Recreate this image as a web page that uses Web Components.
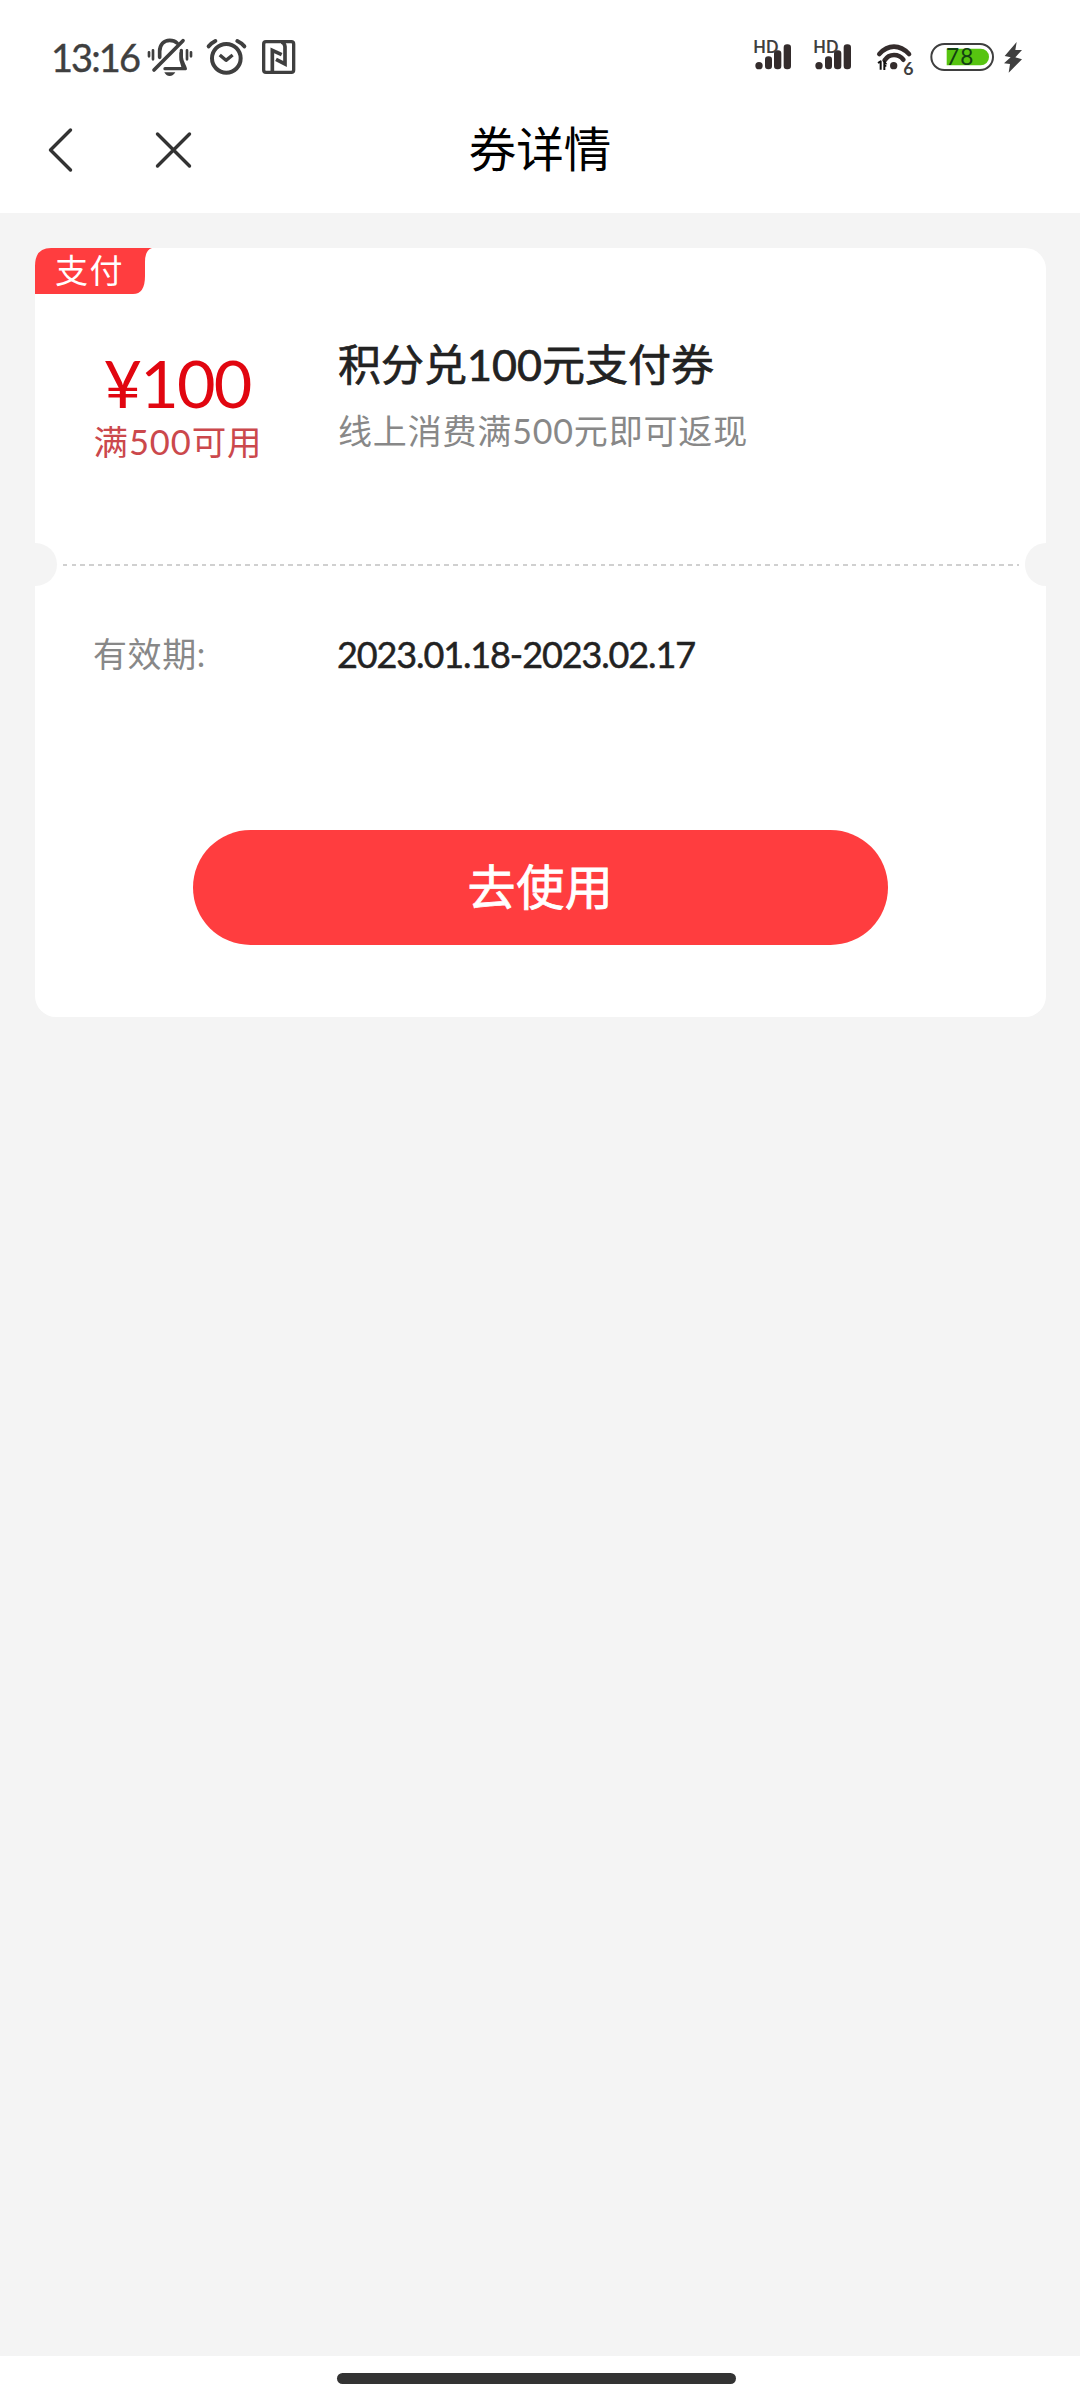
<!DOCTYPE html>
<html lang="zh-CN">
<head>
<meta charset="utf-8">
<title>券详情</title>
<style>
html,body{margin:0;padding:0;background:#f4f4f4}
body{font-family:Lato,"Noto Sans CJK SC",sans-serif;color:#222}
</style>
</head>
<body>
<coupon-page>
  <status-bar></status-bar>
  <nav-bar>券详情</nav-bar>
  <coupon-card>
    <fit-text slot="tag" width="69">支付</fit-text>
    <fit-text slot="amount" width="147">¥100</fit-text>
    <fit-text slot="limit" width="169">满500可用</fit-text>
    <fit-text slot="name" width="376">积分兑100元支付券</fit-text>
    <fit-text slot="desc" width="410">线上消费满500元即可返现</fit-text>
    <fit-text slot="label" width="113">有效期:</fit-text>
    <fit-text slot="date" width="358">2023.01.18-2023.02.17</fit-text>
    <action-button slot="action"><fit-text width="146">去使用</fit-text></action-button>
  </coupon-card>
  <home-indicator></home-indicator>
</coupon-page>
<script>
function define(name, html, connected) {
  const tpl = document.createElement('template');
  tpl.innerHTML = html;
  customElements.define(name, class extends HTMLElement {
    constructor() {
      super();
      this.attachShadow({mode: 'open'}).append(tpl.content.cloneNode(true));
    }
    connectedCallback() { if (connected) connected(this); }
  });
}

define('coupon-page', `<style>
:host{display:flex;flex-direction:column;width:1080px;height:2400px;background:#f4f4f4}
</style><slot></slot>`);

define('status-bar', `<style>
:host{display:flex;align-items:flex-start;box-sizing:border-box;height:100px;padding:20px 0 0 51px;background:#fff;color:#3f3f3f}
svg{display:block;height:80px;flex:none;fill:none;stroke:#3f3f3f;stroke-linecap:round;stroke-linejoin:round}
.time{width:93px;padding-top:14px;font-size:38px;line-height:46px;white-space:nowrap;-webkit-text-stroke:.4px #3f3f3f}
text{fill:#3f3f3f;stroke:none;font-family:Lato,sans-serif}
.gap{flex:1}
.sig{fill:#342c2c;stroke:none}
</style>
<div class="time"><fit-text width="88">13:16</fit-text></div>
<svg style="width:52px" viewBox="342 0 156 240">
 <path d="M357 97v12M369 91v27M471 91v27M483 97v12" stroke-width="8"/>
 <path d="M389 112V94C389 74 402 61 419 61C429 61 436 64 441 69M372 150L459 62" stroke-width="11"/>
 <path d="M454 91V112C455 127 462 134 466 146H405" stroke-width="10"/>
 <path d="M454 91V116L468 146H412L418 141H454L448 120V98Z" fill="#3f3f3f" stroke="none"/>
 <path d="M403 157h33q-6 11-17 11t-16-11z" fill="#3f3f3f" stroke="none"/>
</svg>
<svg style="width:52px;margin-left:4px" viewBox="510 0 156 240" stroke-width="12">
 <circle cx="589" cy="115" r="43"/>
 <path d="M536 79Q544 69 556 63M622 63Q635 69 643 79"/>
 <path d="M573 108L588 121L604 108" stroke-linecap="square" stroke-width="10"/>
</svg>
<svg style="width:50px;margin-left:2px" viewBox="672 0 150 240" stroke-width="10">
 <rect x="701" y="65" width="90" height="92" rx="7"/>
 <path d="M727 154V91L755 104M738 118L765 132V80Q764 68 754 66" stroke-width="11" stroke-linecap="butt" stroke-linejoin="miter"/>
</svg>
<div class="gap"></div>
<svg style="width:60px" viewBox="60 0 180 240">
 <g class="sig"><circle cx="87" cy="137" r="11"/><rect x="105" y="109" width="21" height="39" rx="10"/><rect x="132" y="91" width="22" height="57" rx="10"/><rect x="161" y="73" width="22" height="75" rx="10"/></g>
 <text x="70" y="98" font-size="49" font-weight="700" textLength="75" lengthAdjust="spacingAndGlyphs">HD</text>
</svg>
<svg style="width:60px" viewBox="60 0 180 240">
 <g class="sig"><circle cx="87" cy="137" r="11"/><rect x="105" y="109" width="21" height="39" rx="10"/><rect x="132" y="91" width="22" height="57" rx="10"/><rect x="161" y="73" width="22" height="75" rx="10"/></g>
 <text x="70" y="98" font-size="49" font-weight="700" textLength="75" lengthAdjust="spacingAndGlyphs">HD</text>
</svg>
<svg style="width:55px" viewBox="420 0 165 240" stroke-width="14">
 <path d="M448 102Q468 80 492 80T537 102M464 121Q474 105 492 105T520 119" style="stroke:#342c2c"/>
 <circle class="sig" cx="491" cy="137" r="11"/>
 <path d="M444 129L452 124V149M463 122V150M463 137H469" stroke="#111" stroke-width="6" stroke-linecap="butt"/>
 <path d="M463 120L472 133H463Z" fill="#111" stroke="none"/>
 <text x="520" y="165" font-size="50" font-weight="700" textLength="31" lengthAdjust="spacingAndGlyphs">6</text>
</svg>
<svg style="width:75px" viewBox="585 0 225 240" stroke-width="6">
 <rect x="604" y="72" width="185" height="78" rx="39"/>
 <path d="M650 86H752A25 25 0 0 1 752 136H650Z" fill="#57c410" stroke="none"/>
 <text x="648" y="136" font-size="68" textLength="82" style="fill:#123f12">78</text>
</svg>
<svg style="width:80px" viewBox="810 0 240 240">
 <path d="M860 66L824 108L842 112L822 130L840 132L836 158L876 118L856 112L876 90L856 90Z" fill="#3f3f3f" stroke="none"/>
</svg>`);

define('nav-bar', `<style>
:host{display:grid;grid-template-columns:1fr auto 1fr;align-items:center;height:100px;padding-bottom:13px;background:#fff;color:#000;font-size:47.5px;line-height:60px}
.icons{display:flex;gap:75px;padding-left:44px}
svg{display:block;fill:none;stroke:#333;stroke-width:3.4;stroke-linecap:round;stroke-linejoin:round}
.title{padding-bottom:2px}
</style>
<div class="icons">
<svg width="34" height="50" viewBox="0 0 34 50"><path d="M26.500 5L6.500 25L26.500 45"/></svg>
<svg width="40" height="50" viewBox="0 0 40 50"><path d="M4.500 9L36.500 41M36.500 9L4.500 41"/></svg>
</div><div class="title"><slot></slot></div><div></div>`);

define('coupon-card', `<style>
:host{display:flex;flex-direction:column;position:relative;box-sizing:border-box;width:1011px;height:769px;margin:35px 0 0 35px;background:#fff;border-radius:21px;white-space:nowrap}
.tag{position:absolute;left:0;top:0;width:118px;height:46px}
.tag svg{position:absolute;left:0;top:0}
.tag div{position:relative;padding-left:20px;font-size:33px;line-height:44px;color:#fff}
.top{display:flex;height:295px;box-sizing:border-box;padding-top:83px}
.left{width:269px;margin-right:34px;display:flex;flex-direction:column;align-items:center;box-sizing:border-box;padding-left:15px}
.amount{font-size:66.500px;line-height:80px;height:80px;margin-top:11px;color:#e10610}
.limit{font-size:34.500px;line-height:44px;margin:-2px 0 0 2px;color:#cb484c}
.name{font-size:43px;line-height:56px;margin-top:6px;-webkit-text-stroke:.7px #222}
.desc{font-size:34px;line-height:44px;margin-top:16px;color:#888}
.rule{display:flex;align-items:center;justify-content:space-between;height:43px}
.notch{width:21.500px;height:43px;background:#f4f4f4;border-radius:0 22px 22px 0}
.notch.r{border-radius:22px 0 0 22px}
.dash{flex:1;height:2px;margin:0 6px;background:repeating-linear-gradient(90deg,#d0d0d0 0 4.500px,#fff 4.500px 8.670px)}
.row{display:flex;align-items:center;height:136px;padding-left:58px;box-sizing:border-box}
.label{width:244px;font-size:34px;color:#888;padding-bottom:4px}
.date{font-size:36px;color:#222;-webkit-text-stroke:.5px #222}
.action{display:flex;justify-content:center;padding-top:108px}
</style>
<div class="tag"><svg width="118" height="46" viewBox="0 0 118 46"><path d="M0 46V18Q0 0 16 0H117Q110 2 110 14V28Q110 46 98 46Z" fill="#ff3d3f"/></svg><div><slot name="tag"></slot></div></div>
<div class="top">
 <div class="left"><div class="amount"><slot name="amount"></slot></div><div class="limit"><slot name="limit"></slot></div></div>
 <div class="info"><div class="name"><slot name="name"></slot></div><div class="desc"><slot name="desc"></slot></div></div>
</div>
<div class="rule"><div class="notch"></div><div class="dash"></div><div class="notch r"></div></div>
<div class="row"><div class="label"><slot name="label"></slot></div><div class="date"><slot name="date"></slot></div></div>
<div class="action"><slot name="action"></slot></div>`);

define('action-button', `<style>
:host{display:flex;align-items:center;justify-content:center;width:695px;height:115px;box-sizing:border-box;padding-bottom:2px;border-radius:58px;background:#ff3d3f;color:#fff;font-size:48px;line-height:60px;-webkit-text-stroke:.8px #fff}
</style><slot></slot>`);

define('home-indicator', `<style>
:host{display:flex;justify-content:center;align-items:flex-start;box-sizing:border-box;height:44px;margin-top:auto;padding:17px 7px 0 0;background:#fff}
div{width:399px;height:11px;border-radius:6px;background:#333}
</style><div></div>`);

/* Spreads the letters of a run evenly so that it fills the given width. */
define('fit-text', `<style>
:host{display:inline-block;white-space:nowrap}
</style><span><slot></slot></span>`, el => {
  const n = [...el.textContent.trim()].length;
  el.style.letterSpacing = '0px';
  const w = el.shadowRoot.querySelector('span').getBoundingClientRect().width;
  el.style.letterSpacing = (Number(el.getAttribute('width')) - w) / n + 'px';
});
</script>
</body>
</html>
